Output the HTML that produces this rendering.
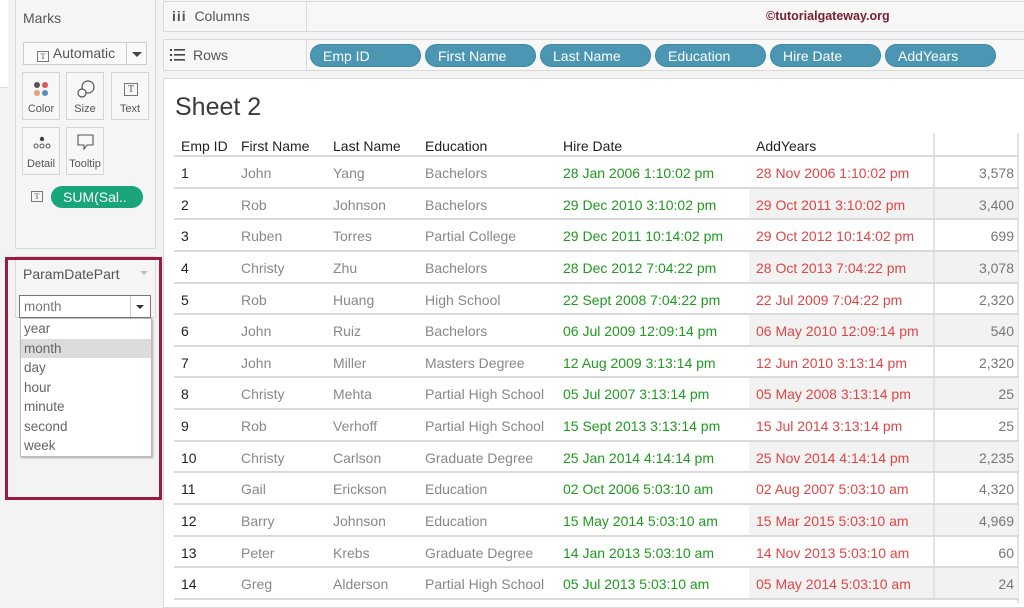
<!DOCTYPE html>
<html><head><meta charset="utf-8"><style>
*{margin:0;padding:0;box-sizing:border-box}
body{width:1024px;height:601px;overflow:hidden;background:#f3f3f3;font-family:"Liberation Sans",sans-serif;position:relative;color:#333}
.abs{position:absolute}
.panel{background:#f5f5f5;border:1px solid #d9d9d9}
.btn{position:absolute;width:38px;height:48px;border:1px solid #d4d4d4;background:#f7f7f7;font-size:11px;color:#555;text-align:center}
.btn span{position:absolute;bottom:4px;left:0;right:0}
.ticon{display:inline-block;width:12px;height:11px;border:1px solid #777;font-size:8px;line-height:9px;text-align:center;color:#555;font-family:"Liberation Serif",serif}
.pill{position:absolute;top:44px;height:23px;width:111px;border-radius:12px;background:#4a96b3;color:#fff;font-size:14px;line-height:23px;padding-left:12px;border:1px solid #3f87a3}
.rows{position:absolute;left:174px;top:157px;width:845px}
.r{position:relative;height:31.65px;border-bottom:2px solid #dadada;font-size:14px;line-height:32px}
.r div{position:absolute;top:0;white-space:nowrap}
.c1{left:7px;color:#222}.c2{left:67px;color:#888}.c3{left:159px;color:#888}.c4{left:251px;color:#888}
.c5{left:389px;color:#1f9a1f}.c6{left:575px;width:184px;height:29.65px;color:#e04545;padding-left:7px}
.c7{left:759px;width:85px;height:29.65px;text-align:right;padding-right:4px;color:#777;border-left:2px solid #e2e2e2}
.g .c6,.g .c7{background:#f2f2f2}
.dd div{height:19.5px;line-height:19.5px;padding-left:3px;font-size:13.5px;color:#666}
</style></head><body>
<div class="abs" style="left:0;top:0;width:8px;height:88px;background:#fff;border-bottom:1px solid #ddd"></div>
<div class="abs panel" style="left:15px;top:-1px;width:141px;height:250px"></div>
<div class="abs" style="left:23px;top:10px;font-size:14px;color:#555">Marks</div>
<div class="abs" style="left:23px;top:42px;width:124px;height:23px;border:1px solid #ccc;background:#fafafa;font-size:14px;color:#555;line-height:21px">
 <span class="ticon" style="margin-left:13px;vertical-align:-1px">T</span>&nbsp;Automatic
 <div class="abs" style="left:102px;top:0;width:1px;height:21px;background:#ccc"></div>
 <div class="abs" style="left:108px;top:9px;border-left:5px solid transparent;border-right:5px solid transparent;border-top:5px solid #444"></div>
</div>
<div class="btn" style="left:22px;top:72px">
 <svg class="abs" style="left:9px;top:8px" width="20" height="16"><circle cx="5" cy="4" r="3" fill="#555"/><circle cx="13" cy="4" r="3" fill="#e2535a"/><circle cx="5" cy="12" r="3" fill="#e8a07a"/><circle cx="13" cy="12" r="3" fill="#5a8fb5"/></svg><span>Color</span></div>
<div class="btn" style="left:66px;top:72px">
 <svg class="abs" style="left:9px;top:6px" width="20" height="20"><circle cx="12" cy="8" r="6" fill="none" stroke="#555" stroke-width="1.2"/><circle cx="6" cy="14" r="4" fill="#f7f7f7" stroke="#555" stroke-width="1.2"/></svg><span>Size</span></div>
<div class="btn" style="left:111px;top:72px"><span class="ticon abs" style="left:12px;top:10px;width:14px;height:13px;line-height:11px;font-size:10px">T</span><span>Text</span></div>
<div class="btn" style="left:22px;top:127px">
 <svg class="abs" style="left:9px;top:8px" width="20" height="14"><circle cx="10" cy="3" r="2.2" fill="#444"/><circle cx="4" cy="10" r="2" fill="none" stroke="#555"/><circle cx="10" cy="10" r="2" fill="none" stroke="#555"/><circle cx="16" cy="10" r="2" fill="none" stroke="#555"/></svg><span>Detail</span></div>
<div class="btn" style="left:66px;top:127px">
 <svg class="abs" style="left:10px;top:6px" width="18" height="18"><path d="M1 1h15v10h-6l-3 4v-4h-6z" fill="none" stroke="#555" stroke-width="1.1"/></svg><span>Tooltip</span></div>
<span class="ticon abs" style="left:31px;top:191px">T</span>
<div class="abs" style="left:51px;top:186px;width:92px;height:22px;border-radius:11px;background:#18a57a;color:#fff;font-size:14px;line-height:22px;padding-left:12px">SUM(Sal..</div>

<div class="abs" style="left:15px;top:256px;width:141px;height:62px;border:1px solid #d9d9d9;background:#f5f5f5"></div>
<div class="abs" style="left:5px;top:257px;width:157px;height:243px;border:3px solid #9b1a3f"></div>
<div class="abs" style="left:23px;top:266px;font-size:14px;color:#555">ParamDatePart</div>
<div class="abs" style="left:140px;top:271px;border-left:4px solid transparent;border-right:4px solid transparent;border-top:4px solid #bbb"></div>
<div class="abs" style="left:19px;top:295px;width:132px;height:23px;border:1px solid #777;background:#fff;font-size:13.5px;color:#777;line-height:21px;padding-left:4px">month
 <div class="abs" style="left:110px;top:0;width:1px;height:21px;background:#ccc"></div>
 <div class="abs" style="left:116px;top:9px;border-left:4px solid transparent;border-right:4px solid transparent;border-top:4px solid #333"></div>
</div>
<div class="abs dd" style="left:20px;top:318px;width:132px;height:139px;background:#fff;border:1px solid #bbb;box-shadow:1px 1px 2px rgba(0,0,0,.3)">
 <div>year</div><div style="background:#dcdcdc">month</div><div>day</div><div>hour</div><div>minute</div><div>second</div><div>week</div>
</div>

<div class="abs panel" style="left:163px;top:1px;width:862px;height:31px;background:#f7f7f7"></div>
<div class="abs" style="left:306px;top:1px;width:1px;height:31px;background:#d9d9d9"></div>
<div class="abs" style="left:172px;top:8px;font-size:14px;color:#555"><b style="letter-spacing:1px">iii</b>&nbsp; Columns</div>
<div class="abs" style="left:766px;top:9px;font-size:12.5px;font-weight:bold;color:#7a2030">©tutorialgateway.org</div>
<div class="abs panel" style="left:163px;top:39px;width:862px;height:32px;background:#f7f7f7"></div>
<div class="abs" style="left:306px;top:39px;width:1px;height:32px;background:#d9d9d9"></div>
<svg class="abs" style="left:170px;top:49px" width="16" height="12"><g fill="#444"><rect x="0" y="0" width="2" height="2"/><rect x="0" y="5" width="2" height="2"/><rect x="0" y="10" width="2" height="2"/><rect x="4" y="0" width="11" height="1.6"/><rect x="4" y="5" width="11" height="1.6"/><rect x="4" y="10" width="11" height="1.6"/></g></svg>
<div class="abs" style="left:193px;top:47px;font-size:14px;color:#555">Rows</div>
<div class="pill" style="left:310px">Emp ID</div>
<div class="pill" style="left:425px">First Name</div>
<div class="pill" style="left:540px">Last Name</div>
<div class="pill" style="left:655px">Education</div>
<div class="pill" style="left:770px">Hire Date</div>
<div class="pill" style="left:885px">AddYears</div>

<div class="abs" style="left:163px;top:78px;width:862px;height:530px;background:#fff;border:1px solid #d9d9d9"></div>
<div class="abs" style="left:175px;top:93px;font-size:25px;color:#3a3a3a">Sheet 2</div>
<div class="abs" style="left:933px;top:133px;width:2px;height:24px;background:#e2e2e2"></div>
<div class="abs" style="left:1017px;top:133px;width:2px;height:470px;background:#e2e2e2"></div>
<div class="abs" style="left:174px;top:138px;width:845px;font-size:14px;color:#222">
 <span class="abs" style="left:7px">Emp ID</span><span class="abs" style="left:67px">First Name</span><span class="abs" style="left:159px">Last Name</span><span class="abs" style="left:251px">Education</span><span class="abs" style="left:389px">Hire Date</span><span class="abs" style="left:582px">AddYears</span>
</div>
<div class="abs" style="left:174px;top:155px;width:845px;height:2px;background:#dadada"></div>
<div class="rows">
<div class="r"><div class="c1">1</div><div class="c2">John</div><div class="c3">Yang</div><div class="c4">Bachelors</div><div class="c5">28 Jan 2006 1:10:02 pm</div><div class="c6">28 Nov 2006 1:10:02 pm</div><div class="c7">3,578</div></div>
<div class="r g"><div class="c1">2</div><div class="c2">Rob</div><div class="c3">Johnson</div><div class="c4">Bachelors</div><div class="c5">29 Dec 2010 3:10:02 pm</div><div class="c6">29 Oct 2011 3:10:02 pm</div><div class="c7">3,400</div></div>
<div class="r"><div class="c1">3</div><div class="c2">Ruben</div><div class="c3">Torres</div><div class="c4">Partial College</div><div class="c5">29 Dec 2011 10:14:02 pm</div><div class="c6">29 Oct 2012 10:14:02 pm</div><div class="c7">699</div></div>
<div class="r g"><div class="c1">4</div><div class="c2">Christy</div><div class="c3">Zhu</div><div class="c4">Bachelors</div><div class="c5">28 Dec 2012 7:04:22 pm</div><div class="c6">28 Oct 2013 7:04:22 pm</div><div class="c7">3,078</div></div>
<div class="r"><div class="c1">5</div><div class="c2">Rob</div><div class="c3">Huang</div><div class="c4">High School</div><div class="c5">22 Sept 2008 7:04:22 pm</div><div class="c6">22 Jul 2009 7:04:22 pm</div><div class="c7">2,320</div></div>
<div class="r g"><div class="c1">6</div><div class="c2">John</div><div class="c3">Ruiz</div><div class="c4">Bachelors</div><div class="c5">06 Jul 2009 12:09:14 pm</div><div class="c6">06 May 2010 12:09:14 pm</div><div class="c7">540</div></div>
<div class="r"><div class="c1">7</div><div class="c2">John</div><div class="c3">Miller</div><div class="c4">Masters Degree</div><div class="c5">12 Aug 2009 3:13:14 pm</div><div class="c6">12 Jun 2010 3:13:14 pm</div><div class="c7">2,320</div></div>
<div class="r g"><div class="c1">8</div><div class="c2">Christy</div><div class="c3">Mehta</div><div class="c4">Partial High School</div><div class="c5">05 Jul 2007 3:13:14 pm</div><div class="c6">05 May 2008 3:13:14 pm</div><div class="c7">25</div></div>
<div class="r"><div class="c1">9</div><div class="c2">Rob</div><div class="c3">Verhoff</div><div class="c4">Partial High School</div><div class="c5">15 Sept 2013 3:13:14 pm</div><div class="c6">15 Jul 2014 3:13:14 pm</div><div class="c7">25</div></div>
<div class="r g"><div class="c1">10</div><div class="c2">Christy</div><div class="c3">Carlson</div><div class="c4">Graduate Degree</div><div class="c5">25 Jan 2014 4:14:14 pm</div><div class="c6">25 Nov 2014 4:14:14 pm</div><div class="c7">2,235</div></div>
<div class="r"><div class="c1">11</div><div class="c2">Gail</div><div class="c3">Erickson</div><div class="c4">Education</div><div class="c5">02 Oct 2006 5:03:10 am</div><div class="c6">02 Aug 2007 5:03:10 am</div><div class="c7">4,320</div></div>
<div class="r g"><div class="c1">12</div><div class="c2">Barry</div><div class="c3">Johnson</div><div class="c4">Education</div><div class="c5">15 May 2014 5:03:10 am</div><div class="c6">15 Mar 2015 5:03:10 am</div><div class="c7">4,969</div></div>
<div class="r"><div class="c1">13</div><div class="c2">Peter</div><div class="c3">Krebs</div><div class="c4">Graduate Degree</div><div class="c5">14 Jan 2013 5:03:10 am</div><div class="c6">14 Nov 2013 5:03:10 am</div><div class="c7">60</div></div>
<div class="r g"><div class="c1">14</div><div class="c2">Greg</div><div class="c3">Alderson</div><div class="c4">Partial High School</div><div class="c5">05 Jul 2013 5:03:10 am</div><div class="c6">05 May 2014 5:03:10 am</div><div class="c7">24</div></div>
</div>
</body></html>
